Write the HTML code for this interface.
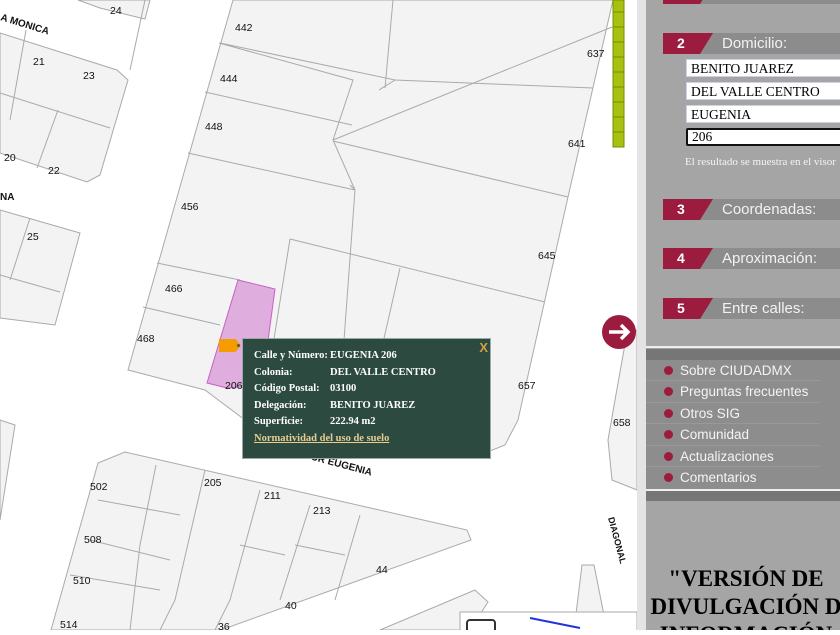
<!DOCTYPE html>
<html><head><meta charset="utf-8"><style>
body{margin:0;width:840px;height:630px;overflow:hidden;position:relative;background:#fff;font-family:"Liberation Sans",sans-serif}
.map{position:absolute;left:0;top:0;width:637px;height:630px}
.side{position:absolute;left:646px;top:0;width:194px;height:630px;background:#a5a5a5;overflow:hidden}
.strip{position:absolute;left:637px;top:0;width:9px;height:630px;background:#e4e4e4}
.hd{position:absolute;left:17px;width:177px;height:21px;background:#8c8c8c}
.hd .n{position:absolute;left:0;top:0;width:50px;height:21px;background:#9b1c3f;clip-path:polygon(0 0,100% 0,74% 100%,0 100%);color:#fff;font-weight:bold;font-size:14px;line-height:21px;text-indent:14px}
.hd .t{position:absolute;left:59px;top:0;color:#f2f2f2;font-size:15px;line-height:21px}
.in{position:absolute;left:40px;width:160px;height:18px;background:#fff;border:1px solid #c9d3e4;font-family:"Liberation Serif",serif;font-size:13.5px;line-height:17px;text-indent:4px;color:#000;box-sizing:border-box}
.menu{position:absolute;left:0;top:360px;width:194px;height:130px;background:#8d8d8d}
.menu div{height:21.4px;box-sizing:border-box;line-height:21px;color:#f4f4f4;font-size:13.5px;padding-left:34px;position:relative;border-bottom:1px solid #999;margin-right:20px}
.menu div:before{content:"";position:absolute;left:18px;top:6px;width:9px;height:9px;border-radius:50%;background:#9b1c3f}
.pop{position:absolute;left:242px;top:338px;width:249px;height:121px;background:#2c4a40;border:1px solid #9aa;box-sizing:border-box;font-family:"Liberation Serif",serif;font-weight:bold;font-size:10.5px;color:#fff}
.pop .r{position:absolute;left:11px}
.pop .v{position:absolute;left:87px}
.lbl{font-size:10.5px;fill:#111;font-family:"Liberation Sans",sans-serif}
</style></head><body>
<div class="map">
<svg width="637" height="630" viewBox="0 0 637 630">
<g fill="#f3f3f3" stroke="#aaa" stroke-width="1">
<polygon points="233,0 613,0 568,197 518,420 505,445 480,455 245,420 205,390 128,370"/>
<polygon points="0,33 117,70 128,80 100,175 87,182 0,153"/>
<polygon points="78,0 150,0 145,19 100,8"/>
<polygon points="0,210 80,233 55,325 0,318"/>
<polygon points="0,420 15,425 0,520"/>
<polygon points="125,452 467,530 471,540 221,630 51,630 98,463"/>
<polygon points="475,590 488,602 470,630 380,630"/>
<polygon points="627,333 637,330 637,490 612,480 608,440 615,400"/>
<polygon points="582,565 594,565 607,630 574,630"/>
</g>
<g stroke="#aaa" fill="none">
<path d="M220,43 L395,80 L379,90 M393,0 L385,88 M219,43 L353,80 L333,140 L355,190 L350,185 M205,92 L352,125 M188,153 L355,190 M157,263 L240,280 M143,307 L220,325 M333,140 L612,27 M395,80 L593,88 M333,141 L568,197 M355,190 L340,395 M290,239 L545,302 M290,239 L265,395 M400,268 L370,400 M130,70 L145,0 M26,30 L10,120 M0,93 L110,128 M58,110 L37,168 M30,218 L10,280 M0,275 L60,292 M156,465 L140,545 L130,630 M98,500 L180,515 M90,540 L170,560 M70,575 L160,590 M205,470 L175,600 L160,630 M260,490 L230,600 L215,630 M310,505 L280,600 M240,545 L285,555 M295,545 L345,555 M360,515 L335,600"/>
</g>
<polygon points="238,280 275,289 262,385 227,388 207,383" fill="#dfaede" stroke="#c660c6"/>
<rect x="613" y="0" width="11" height="147" fill="#a8c010" stroke="#7a8c00"/>
<g stroke="#7a8c00"><path d="M613,12H624M613,27H624M613,42H624M613,57H624M613,72H624M613,87H624M613,102H624M613,117H624M613,132H624"/></g>
<g class="lbl">
<text x="110" y="14">24</text><text x="235" y="31">442</text><text x="220" y="82">444</text><text x="205" y="130">448</text>
<text x="181" y="210">456</text><text x="165" y="292">466</text><text x="137" y="342">468</text><text x="33" y="65">21</text><text x="83" y="79">23</text>
<text x="4" y="161">20</text><text x="48" y="174">22</text><text x="27" y="240">25</text><text x="587" y="57">637</text><text x="568" y="147">641</text>
<text x="538" y="259">645</text><text x="518" y="389">657</text><text x="613" y="426">658</text><text x="225" y="389">206</text>
<text x="90" y="490">502</text><text x="204" y="486">205</text><text x="264" y="499">211</text><text x="313" y="514">213</text>
<text x="84" y="543">508</text><text x="73" y="584">510</text><text x="60" y="628">514</text><text x="376" y="573">44</text><text x="285" y="609">40</text><text x="218" y="630">36</text>
<text x="0" y="20" transform="rotate(17 0 20)" font-weight="bold" font-size="10">A MONICA</text>
<text x="0" y="200" font-weight="bold" font-size="10">NA</text>
<text x="275" y="450" transform="rotate(15 275 450)" font-weight="bold" font-size="10">EJE 5 SUR EUGENIA</text>
<text x="608" y="518" transform="rotate(75 608 518)" font-weight="bold" font-size="9">DIAGONAL</text>
</g>
<rect x="460" y="612" width="177" height="20" fill="#fff" stroke="#aaa"/>
<rect x="467" y="620" width="28" height="14" rx="3" fill="none" stroke="#333" stroke-width="2"/>
<path d="M530,618 L580,628" stroke="#2233dd" stroke-width="2"/>
<circle cx="619" cy="332" r="17" fill="#9b1c3f"/>
<path d="M609,332H628M621,325L628,332L621,339" stroke="#fff" stroke-width="3.5" fill="none"/>
</svg>
</div>
<div style="position:absolute;left:219px;top:339px;width:22px;height:13px;background:#f59c00;clip-path:polygon(0 0,75% 0,100% 50%,75% 100%,0 100%)"></div>
<div style="position:absolute;left:237px;top:344px;width:3px;height:3px;border-radius:50%;background:#555"></div>
<div class="pop">
<div style="position:absolute;right:2px;top:1px;color:#d4a040;font-size:13px;font-family:'Liberation Sans',sans-serif">X</div>
<div class="r" style="top:11px">Calle y Número:</div><div class="v" style="top:11px">EUGENIA 206</div>
<div class="r" style="top:28px">Colonia:</div><div class="v" style="top:28px">DEL VALLE CENTRO</div>
<div class="r" style="top:44px">Código Postal:</div><div class="v" style="top:44px">03100</div>
<div class="r" style="top:61px">Delegación:</div><div class="v" style="top:61px">BENITO JUAREZ</div>
<div class="r" style="top:77px">Superficie:</div><div class="v" style="top:77px">222.94 m2</div>
<div class="r" style="top:94px;color:#e8cc90;text-decoration:underline">Normatividad del uso de suelo</div>
</div>
<div class="strip"></div>
<div class="side">
<div class="hd" style="top:-17px"><div class="n"></div></div>
<div class="hd" style="top:33px"><div class="n">2</div><div class="t">Domicilio:</div></div>
<div class="in" style="top:59px">BENITO JUAREZ</div>
<div class="in" style="top:82px">DEL VALLE CENTRO</div>
<div class="in" style="top:105px">EUGENIA</div>
<div class="in" style="top:128px;border:2px solid #111;border-radius:2px;line-height:14px">206</div>
<div style="position:absolute;left:39px;top:156px;color:#f4f4f4;font-family:'Liberation Serif',serif;font-size:11px;white-space:nowrap">El resultado se muestra en el visor</div>
<div class="hd" style="top:199px"><div class="n">3</div><div class="t">Coordenadas:</div></div>
<div class="hd" style="top:248px"><div class="n">4</div><div class="t">Aproximación:</div></div>
<div class="hd" style="top:298px"><div class="n">5</div><div class="t">Entre calles:</div></div>
<div style="position:absolute;left:0;top:346px;width:194px;height:2px;background:#eee"></div>
<div style="position:absolute;left:0;top:349px;width:194px;height:11px;background:#767676"></div>
<div class="menu"><div>Sobre CIUDADMX</div><div>Preguntas frecuentes</div><div>Otros SIG</div><div>Comunidad</div><div>Actualizaciones</div><div style="border:0">Comentarios</div></div>
<div style="position:absolute;left:0;top:489px;width:194px;height:2px;background:#eee"></div>
<div style="position:absolute;left:0;top:491px;width:194px;height:10px;background:#767676"></div>
<div style="position:absolute;left:-10px;top:565px;width:220px;text-align:center;font-family:'Liberation Serif',serif;font-weight:bold;font-size:23px;line-height:28px;color:#000;white-space:nowrap">"VERSIÓN DE<br>DIVULGACIÓN D<br>INFORMACIÓN</div>
</div>
</body></html>
